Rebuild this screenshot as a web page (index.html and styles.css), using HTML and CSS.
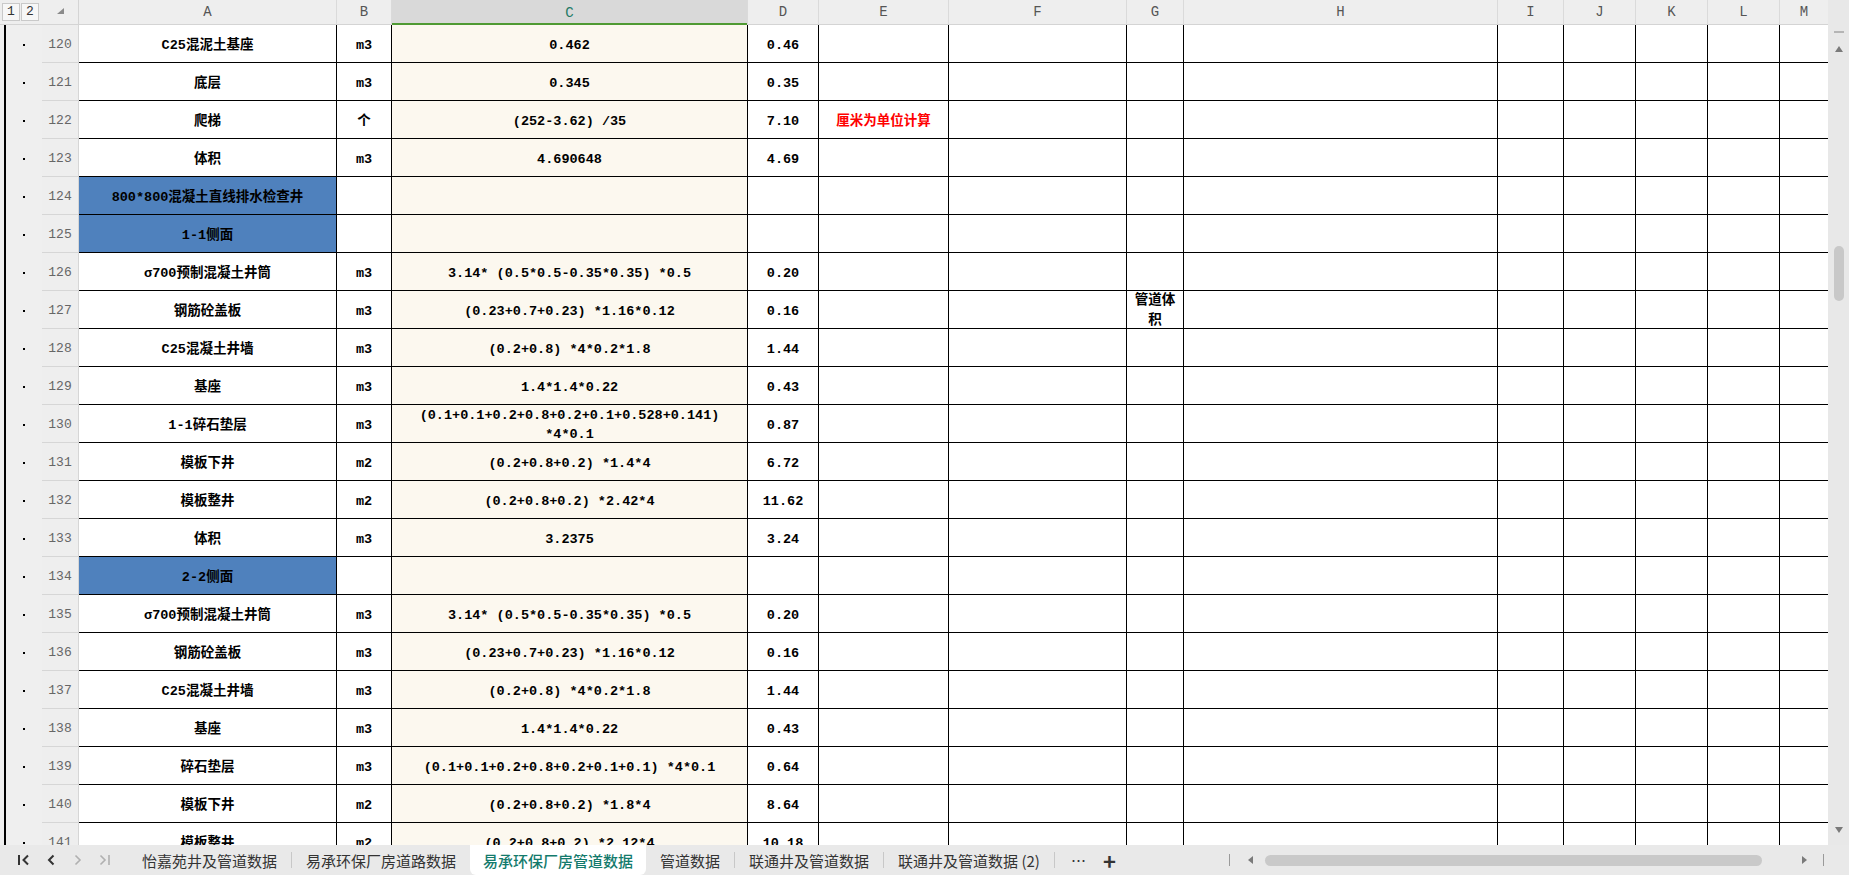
FILE: index.html
```html
<!DOCTYPE html>
<html lang="zh-CN">
<head>
<meta charset="utf-8">
<title>易承环保厂房管道数据</title>
<link rel="stylesheet" href="styles.css">
</head>
<body>
<div class="app">
  <div class="body">
    <div class="sheet">
      <div class="row head">
        <div class="lv"><span>1</span><span>2</span></div>
        <div class="corner"><i></i></div>
        <div class="h">A</div><div class="h">B</div><div class="h sel">C</div><div class="h">D</div><div class="h">E</div><div class="h">F</div><div class="h">G</div><div class="h hr">H</div><div class="h">I</div><div class="h">J</div><div class="h">K</div><div class="h">L</div><div class="h last">M</div>
      </div>

      <div class="row"><div class="g"></div><div class="n">120</div><div class="c">C25混泥土基座</div><div class="c">m3</div><div class="c cr">0.462</div><div class="c">0.46</div><div class="c"></div><div class="c"></div><div class="c"></div><div class="c"></div><div class="c"></div><div class="c"></div><div class="c"></div><div class="c"></div><div class="c last"></div></div>
      <div class="row"><div class="g"></div><div class="n">121</div><div class="c">底层</div><div class="c">m3</div><div class="c cr">0.345</div><div class="c">0.35</div><div class="c"></div><div class="c"></div><div class="c"></div><div class="c"></div><div class="c"></div><div class="c"></div><div class="c"></div><div class="c"></div><div class="c last"></div></div>
      <div class="row"><div class="g"></div><div class="n">122</div><div class="c">爬梯</div><div class="c">个</div><div class="c cr">(252-3.62) /35</div><div class="c">7.10</div><div class="c red">厘米为单位计算</div><div class="c"></div><div class="c"></div><div class="c"></div><div class="c"></div><div class="c"></div><div class="c"></div><div class="c"></div><div class="c last"></div></div>
      <div class="row"><div class="g"></div><div class="n">123</div><div class="c">体积</div><div class="c">m3</div><div class="c cr">4.690648</div><div class="c">4.69</div><div class="c"></div><div class="c"></div><div class="c"></div><div class="c"></div><div class="c"></div><div class="c"></div><div class="c"></div><div class="c"></div><div class="c last"></div></div>
      <div class="row"><div class="g"></div><div class="n">124</div><div class="c blue">800*800混凝土直线排水检查井</div><div class="c"></div><div class="c cr"></div><div class="c"></div><div class="c"></div><div class="c"></div><div class="c"></div><div class="c"></div><div class="c"></div><div class="c"></div><div class="c"></div><div class="c"></div><div class="c last"></div></div>
      <div class="row"><div class="g"></div><div class="n">125</div><div class="c blue">1-1侧面</div><div class="c"></div><div class="c cr"></div><div class="c"></div><div class="c"></div><div class="c"></div><div class="c"></div><div class="c"></div><div class="c"></div><div class="c"></div><div class="c"></div><div class="c"></div><div class="c last"></div></div>
      <div class="row"><div class="g"></div><div class="n">126</div><div class="c">σ700预制混凝土井筒</div><div class="c">m3</div><div class="c cr">3.14* (0.5*0.5-0.35*0.35) *0.5</div><div class="c">0.20</div><div class="c"></div><div class="c"></div><div class="c"></div><div class="c"></div><div class="c"></div><div class="c"></div><div class="c"></div><div class="c"></div><div class="c last"></div></div>
      <div class="row"><div class="g"></div><div class="n">127</div><div class="c">钢筋砼盖板</div><div class="c">m3</div><div class="c cr">(0.23+0.7+0.23) *1.16*0.12</div><div class="c">0.16</div><div class="c"></div><div class="c"></div><div class="c narrow">管道体积</div><div class="c"></div><div class="c"></div><div class="c"></div><div class="c"></div><div class="c"></div><div class="c last"></div></div>
      <div class="row"><div class="g"></div><div class="n">128</div><div class="c">C25混凝土井墙</div><div class="c">m3</div><div class="c cr">(0.2+0.8) *4*0.2*1.8</div><div class="c">1.44</div><div class="c"></div><div class="c"></div><div class="c"></div><div class="c"></div><div class="c"></div><div class="c"></div><div class="c"></div><div class="c"></div><div class="c last"></div></div>
      <div class="row"><div class="g"></div><div class="n">129</div><div class="c">基座</div><div class="c">m3</div><div class="c cr">1.4*1.4*0.22</div><div class="c">0.43</div><div class="c"></div><div class="c"></div><div class="c"></div><div class="c"></div><div class="c"></div><div class="c"></div><div class="c"></div><div class="c"></div><div class="c last"></div></div>
      <div class="row"><div class="g"></div><div class="n">130</div><div class="c">1-1碎石垫层</div><div class="c">m3</div><div class="c cr">(0.1+0.1+0.2+0.8+0.2+0.1+0.528+0.141) *4*0.1</div><div class="c">0.87</div><div class="c"></div><div class="c"></div><div class="c"></div><div class="c"></div><div class="c"></div><div class="c"></div><div class="c"></div><div class="c"></div><div class="c last"></div></div>
      <div class="row"><div class="g"></div><div class="n">131</div><div class="c">模板下井</div><div class="c">m2</div><div class="c cr">(0.2+0.8+0.2) *1.4*4</div><div class="c">6.72</div><div class="c"></div><div class="c"></div><div class="c"></div><div class="c"></div><div class="c"></div><div class="c"></div><div class="c"></div><div class="c"></div><div class="c last"></div></div>
      <div class="row"><div class="g"></div><div class="n">132</div><div class="c">模板整井</div><div class="c">m2</div><div class="c cr">(0.2+0.8+0.2) *2.42*4</div><div class="c">11.62</div><div class="c"></div><div class="c"></div><div class="c"></div><div class="c"></div><div class="c"></div><div class="c"></div><div class="c"></div><div class="c"></div><div class="c last"></div></div>
      <div class="row"><div class="g"></div><div class="n">133</div><div class="c">体积</div><div class="c">m3</div><div class="c cr">3.2375</div><div class="c">3.24</div><div class="c"></div><div class="c"></div><div class="c"></div><div class="c"></div><div class="c"></div><div class="c"></div><div class="c"></div><div class="c"></div><div class="c last"></div></div>
      <div class="row"><div class="g"></div><div class="n">134</div><div class="c blue">2-2侧面</div><div class="c"></div><div class="c cr"></div><div class="c"></div><div class="c"></div><div class="c"></div><div class="c"></div><div class="c"></div><div class="c"></div><div class="c"></div><div class="c"></div><div class="c"></div><div class="c last"></div></div>
      <div class="row"><div class="g"></div><div class="n">135</div><div class="c">σ700预制混凝土井筒</div><div class="c">m3</div><div class="c cr">3.14* (0.5*0.5-0.35*0.35) *0.5</div><div class="c">0.20</div><div class="c"></div><div class="c"></div><div class="c"></div><div class="c"></div><div class="c"></div><div class="c"></div><div class="c"></div><div class="c"></div><div class="c last"></div></div>
      <div class="row"><div class="g"></div><div class="n">136</div><div class="c">钢筋砼盖板</div><div class="c">m3</div><div class="c cr">(0.23+0.7+0.23) *1.16*0.12</div><div class="c">0.16</div><div class="c"></div><div class="c"></div><div class="c"></div><div class="c"></div><div class="c"></div><div class="c"></div><div class="c"></div><div class="c"></div><div class="c last"></div></div>
      <div class="row"><div class="g"></div><div class="n">137</div><div class="c">C25混凝土井墙</div><div class="c">m3</div><div class="c cr">(0.2+0.8) *4*0.2*1.8</div><div class="c">1.44</div><div class="c"></div><div class="c"></div><div class="c"></div><div class="c"></div><div class="c"></div><div class="c"></div><div class="c"></div><div class="c"></div><div class="c last"></div></div>
      <div class="row"><div class="g"></div><div class="n">138</div><div class="c">基座</div><div class="c">m3</div><div class="c cr">1.4*1.4*0.22</div><div class="c">0.43</div><div class="c"></div><div class="c"></div><div class="c"></div><div class="c"></div><div class="c"></div><div class="c"></div><div class="c"></div><div class="c"></div><div class="c last"></div></div>
      <div class="row"><div class="g"></div><div class="n">139</div><div class="c">碎石垫层</div><div class="c">m3</div><div class="c cr">(0.1+0.1+0.2+0.8+0.2+0.1+0.1) *4*0.1</div><div class="c">0.64</div><div class="c"></div><div class="c"></div><div class="c"></div><div class="c"></div><div class="c"></div><div class="c"></div><div class="c"></div><div class="c"></div><div class="c last"></div></div>
      <div class="row"><div class="g"></div><div class="n">140</div><div class="c">模板下井</div><div class="c">m2</div><div class="c cr">(0.2+0.8+0.2) *1.8*4</div><div class="c">8.64</div><div class="c"></div><div class="c"></div><div class="c"></div><div class="c"></div><div class="c"></div><div class="c"></div><div class="c"></div><div class="c"></div><div class="c last"></div></div>
      <div class="row"><div class="g"></div><div class="n">141</div><div class="c">模板整井</div><div class="c">m2</div><div class="c cr">(0.2+0.8+0.2) *2.12*4</div><div class="c">10.18</div><div class="c"></div><div class="c"></div><div class="c"></div><div class="c"></div><div class="c"></div><div class="c"></div><div class="c"></div><div class="c"></div><div class="c last"></div></div>
    </div>
    <div class="vscroll">
      <i class="dash"></i>
      <i class="up"></i>
      <i class="vthumb"></i>
      <i class="down"></i>
    </div>
  </div>

  <div class="tabbar">
    <div class="nav">
      <svg width="14" height="14" viewBox="0 0 14 14"><path d="M2 2v10" stroke="#333" stroke-width="2"/><path d="M11 2.5 6.5 7 11 11.5" fill="none" stroke="#333" stroke-width="2"/></svg>
      <svg width="14" height="14" viewBox="0 0 14 14"><path d="M9.5 2.5 5 7l4.5 4.5" fill="none" stroke="#333" stroke-width="2"/></svg>
      <svg width="14" height="14" viewBox="0 0 14 14"><path d="M4.5 2.5 9 7l-4.5 4.5" fill="none" stroke="#b0b0b0" stroke-width="1.6"/></svg>
      <svg width="14" height="14" viewBox="0 0 14 14"><path d="M2.5 2.5 7 7l-4.5 4.5" fill="none" stroke="#b0b0b0" stroke-width="1.6"/><path d="M11 2v10" stroke="#b0b0b0" stroke-width="1.6"/></svg>
    </div>
    <div class="tab">怡嘉苑井及管道数据</div>
    <i class="sep"></i>
    <div class="tab">易承环保厂房道路数据</div>
    <div class="tab active">易承环保厂房管道数据</div>
    <div class="tab">管道数据</div>
    <i class="sep"></i>
    <div class="tab">联通井及管道数据</div>
    <i class="sep"></i>
    <div class="tab">联通井及管道数据 (2)</div>
    <i class="sep"></i>
    <div class="more">⋯</div>
    <div class="add">+</div>
    <div class="hscroll">
      <i class="hsep"></i>
      <i class="left"></i>
      <i class="hthumb"></i>
      <i class="right"></i>
      <i class="hsep"></i>
    </div>
  </div>
</div>
</body>
</html>
```

FILE: styles.css
```css
* {
  box-sizing: border-box;
  margin: 0;
  padding: 0;
}

body {
  width: 1849px;
  height: 875px;
  overflow: hidden;
  background: #ffffff;
  font-family: "Liberation Mono", "Noto Sans CJK SC", monospace;
}

.app {
  display: flex;
  flex-direction: column;
  width: 1849px;
  height: 875px;
}

.body {
  display: flex;
  height: 845px;
  overflow: hidden;
}

.sheet {
  width: 1828px;
  height: 845px;
  overflow: hidden;
}

.row {
  display: grid;
  grid-template-columns: 42px 37px 258px 55px 356px 71px 130px 178px 57px 314px 66px 72px 72px 72px 48px;
  height: 38px;
}

/* ---------- header row ---------- */
.head {
  height: 25px;
  background: #eeeeee;
}

.lv {
  display: flex;
  gap: 1px;
  padding: 3px 0 0 2px;
  background: #eeeeee;
  border-bottom: 1px solid #d4d4d4;
}

.lv span {
  width: 18px;
  height: 18px;
  border: 1px solid #c9c9c9;
  background: #f7f7f7;
  color: #333;
  font-size: 13px;
  line-height: 16px;
  text-align: center;
}

.corner {
  display: flex;
  align-items: center;
  justify-content: center;
  padding-bottom: 3px;
  border-bottom: 1px solid #d4d4d4;
  border-right: 1px solid #d4d4d4;
}

.corner i {
  width: 0;
  height: 0;
  border-left: 7px solid transparent;
  border-bottom: 6px solid #8a8a8a;
}

.h {
  display: flex;
  align-items: center;
  justify-content: center;
  border-right: 1px solid #dadada;
  border-bottom: 1px solid #d4d4d4;
  color: #555555;
  font-size: 14px;
}

.h.sel {
  background: #d9d9d9;
  color: #1f7a66;
  border-bottom: 0;
  box-shadow: inset 0 -2px 0 #4f9a33;
}

.h.last {
  border-right: 0;
}

/* ---------- body cells ---------- */
.g {
  position: relative;
  background:
    linear-gradient(to right, transparent 4px, #000 4px, #000 6px, transparent 6px),
    #efefef;
}

.g::after {
  content: "";
  position: absolute;
  left: 23px;
  top: 19px;
  width: 2px;
  height: 2px;
  background: #000;
}

.n {
  display: flex;
  align-items: center;
  justify-content: center;
  padding-top: 2px;
  background: #eeeeee;
  border-right: 1px solid #d6d6d6;
  border-bottom: 1px solid #d6d6d6;
  color: #666666;
  font-size: 13px;
}

.c {
  display: flex;
  align-items: center;
  justify-content: center;
  padding: 3px 2px 0;
  border-right: 1px solid #000;
  border-bottom: 1px solid #000;
  color: #000;
  font-size: 13.5px;
  font-weight: 700;
  line-height: 19px;
  text-align: center;
  overflow: hidden;
}

.c.last {
  border-right: 0;
}

.c.cr {
  background: #fcf8ef;
}

.c.blue {
  background: #4f81bd;
}

.c.red {
  color: #ff0000;
}

.c.narrow {
  padding: 3px 4px 0;
  line-height: 20px;
}

/* ---------- vertical scrollbar ---------- */
.vscroll {
  width: 21px;
  height: 845px;
  background: #e8e8e8;
  display: flex;
  flex-direction: column;
  align-items: center;
  padding: 31px 0 12px;
}

.vscroll .dash {
  width: 10px;
  height: 2px;
  background: #b5b5b5;
}

.vscroll .up {
  margin-top: 13px;
  width: 0;
  height: 0;
  border-left: 4px solid transparent;
  border-right: 4px solid transparent;
  border-bottom: 6px solid #7a7a7a;
}

.vscroll .vthumb {
  margin-top: 194px;
  width: 10px;
  height: 55px;
  border-radius: 5px;
  background: #c8c8c8;
}

.vscroll .down {
  margin-top: auto;
  width: 0;
  height: 0;
  border-left: 4px solid transparent;
  border-right: 4px solid transparent;
  border-top: 6px solid #7a7a7a;
}

/* ---------- sheet tabs ---------- */
.tabbar {
  display: flex;
  align-items: center;
  height: 30px;
  background: #e9e9e9;
  font-family: "Noto Sans CJK SC", "Noto Sans", sans-serif;
  font-size: 15px;
  color: #333333;
}

.nav {
  display: flex;
  align-items: center;
  width: 128px;
  padding-left: 17px;
  gap: 13px;
}

.nav svg {
  display: block;
}

.tab {
  display: flex;
  align-items: center;
  height: 30px;
  padding: 0 14px;
  white-space: nowrap;
}

.tab.active {
  padding: 0 13px;
  background: #ffffff;
  color: #137a6c;
  font-weight: 500;
  border-radius: 0 0 6px 6px;
}

.sep {
  width: 1px;
  height: 16px;
  background: #c8c8c8;
}

.more {
  margin-left: 16px;
  font-size: 15px;
  color: #333;
}

.add {
  margin-left: 17px;
  font-size: 22px;
  font-weight: 700;
  line-height: 1;
  color: #333;
}

.hscroll {
  margin-left: auto;
  display: flex;
  align-items: center;
  padding-right: 25px;
}

.hsep {
  width: 1px;
  height: 12px;
  background: #9a9a9a;
}

.left {
  margin-left: 18px;
  width: 0;
  height: 0;
  border-top: 4px solid transparent;
  border-bottom: 4px solid transparent;
  border-right: 5px solid #7a7a7a;
}

.hthumb {
  margin-left: 12px;
  width: 497px;
  height: 11px;
  border-radius: 6px;
  background: #c9c9c9;
}

.right {
  margin-left: 40px;
  width: 0;
  height: 0;
  border-top: 4px solid transparent;
  border-bottom: 4px solid transparent;
  border-left: 5px solid #7a7a7a;
}

.right + .hsep {
  margin-left: 16px;
}
```
